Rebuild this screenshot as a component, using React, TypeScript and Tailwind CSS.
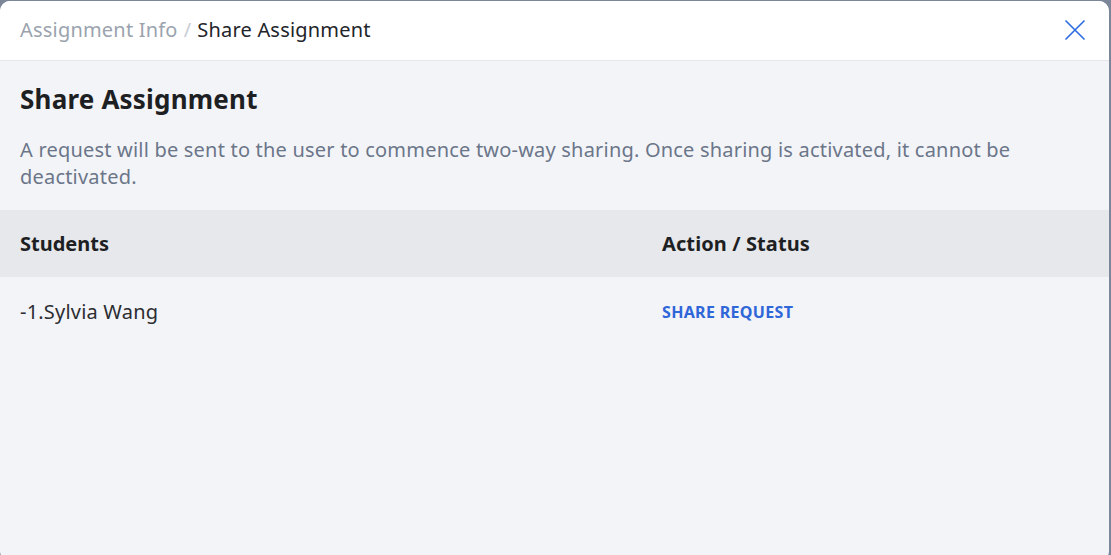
export default function App() {
  return (
    <div className="h-[555px] w-[1111px] overflow-hidden bg-[#7b8799] pt-px font-['Noto_Sans',sans-serif]">
      <div className="flex h-[560px] w-[1109px] flex-col overflow-hidden rounded-[10px] bg-[#f3f4f8]">
        <div className="flex h-[60px] shrink-0 items-center justify-between border-b border-[#e5e7eb] bg-white pb-px pl-5 pr-[24px]">
          <div className="flex items-center text-[20px] leading-none tracking-[0.2px]">
            <span className="text-[#9aa3ae]">Assignment Info</span>
            <span className="mx-[6px] text-[#c9ced6]">/</span>
            <span className="text-[#222429]">Share Assignment</span>
          </div>
          <button className="text-[#2f6ee0]">
            <svg width="20" height="20" viewBox="0 0 20 20" fill="none" stroke="currentColor" strokeWidth="1.7" strokeLinecap="round">
              <path d="M1 1L19 19M19 1L1 19" />
            </svg>
          </button>
        </div>

        <div className="px-5 pt-[20px]">
          <h2 className="text-[26px] font-bold leading-[36px] tracking-[0.2px] text-[#1d1f23]">Share Assignment</h2>
          <p className="mt-[19px] text-[20px] leading-[27px] tracking-[0.2px] text-[#6b7689]">
            A request will be sent to the user to commence two-way sharing. Once sharing is activated, it cannot be
            deactivated.
          </p>
        </div>

        <div className="mt-[20px]">
          <div className="grid h-[67px] grid-cols-[642px_1fr] items-center bg-[#e7e8ec] text-[20px] font-bold text-[#1d1f23]">
            <div className="px-5">Students</div>
            <div className="px-5 tracking-[0.1px]">Action / Status</div>
          </div>
          <div className="grid h-[70px] grid-cols-[642px_1fr] items-center">
            <div className="px-5 text-[20px] tracking-[0.2px] text-[#2b2d31]">-1.Sylvia Wang</div>
            <div className="px-5">
              <button className="text-[16px] font-bold uppercase tracking-[0.33px] text-[#2f66d8]">Share Request</button>
            </div>
          </div>
        </div>
      </div>
    </div>
  );
}
